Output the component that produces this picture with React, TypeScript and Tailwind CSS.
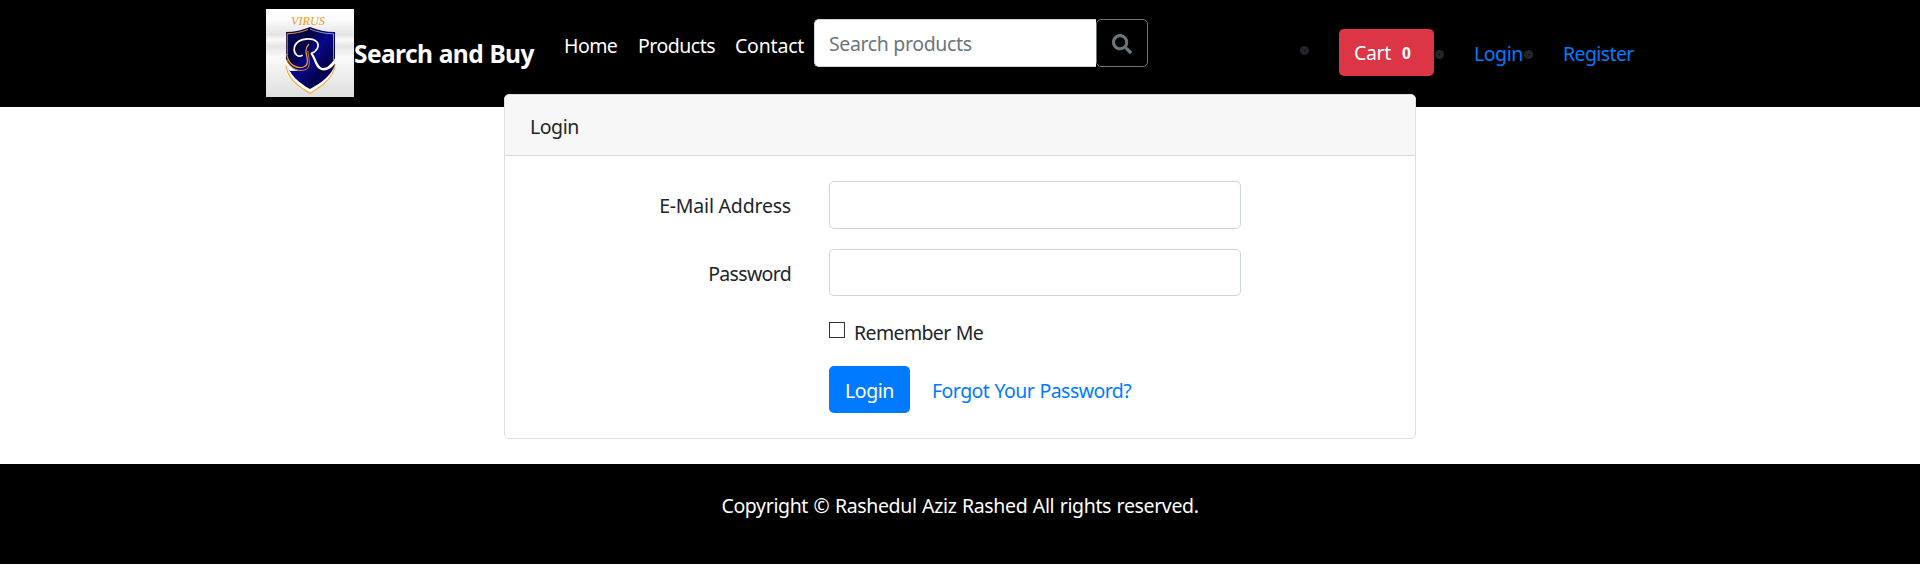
import type { ReactNode } from 'react';

function Logo() {
  return (
    <svg className="mt-[9px] size-[88px] shrink-0" viewBox="0 0 88 88" aria-label="Virus logo">
      <defs>
        <linearGradient id="paper" x1="0" y1="0" x2="0" y2="1">
          <stop offset="0" stopColor="#ffffff" />
          <stop offset=".12" stopColor="#fcfcfc" />
          <stop offset=".29" stopColor="#e4e4e4" />
          <stop offset=".35" stopColor="#fafafa" />
          <stop offset=".42" stopColor="#e5e5e5" />
          <stop offset=".55" stopColor="#fafafa" />
          <stop offset="1" stopColor="#dedede" />
        </linearGradient>
        <linearGradient id="navy" x1="0" y1="0" x2="1" y2="1">
          <stop offset="0" stopColor="#0a0a62" />
          <stop offset=".3" stopColor="#020240" />
          <stop offset=".5" stopColor="#08088a" />
          <stop offset=".72" stopColor="#02024e" />
          <stop offset="1" stopColor="#080878" />
        </linearGradient>
      </defs>
      <rect width="88" height="88" fill="url(#paper)" />
      <text x="25" y="16.2" textLength="34" lengthAdjust="spacingAndGlyphs" fontFamily="Liberation Serif, serif" fontStyle="italic" fontSize="12.5" fill="#f2992a">VIRUS</text>
      <path d="M20 56 C21 69 32 77 44 84.300 C56 77 68 69 69 55" fill="#fff" stroke="#f7a82f" strokeWidth="1.1" />
      <path d="M44 18 C51 21 60 23 69 23 V55 C66 66 56 73.500 44 80 C33 74 23.500 66 20 53 V23 C28 23 37 21 44 18Z" fill="url(#navy)" />
      <path d="M44 20 C51 23 59 24.700 67.500 24.800 V51" stroke="#c9c9e2" strokeWidth=".7" fill="none" />
      <path d="M42 20.500 C35 23.500 28 24.500 21.200 24.800 V46" stroke="#e39528" strokeWidth="1" fill="none" />
      <path d="M20 50 C24 60 31 62.500 38 61.500 L24 62 L20 56Z" fill="#fff" />
      <path d="M20.800 45 C22 56 31 60 37.500 58 C44.500 55.500 40 47 40 42 C40 38.500 41.500 36.500 43 35" stroke="#f0a030" strokeWidth="1.200" fill="none" />
      <path d="M20.500 50 C25 61 34 63 40 60.500 C46 57 42 48 42 42" stroke="#d98e2a" strokeWidth=".9" fill="none" />
      <path d="M36 46.500 C32.500 48.500 28.200 45.500 28.200 40.500 C28.200 33.500 35 29.800 42 29.800 C50 29.800 53.500 34 51.500 39 C50.300 42 48 43.300 45.500 44.300" stroke="#fff" strokeWidth="1.700" fill="none" strokeLinecap="round" />
      <path d="M45.500 43.500 C49.500 46 51 57 56 59 C61 60 66 54 69.300 49 V54 C65 60.500 59 63 54 60.500 C48.500 57.500 48 49 44.500 45Z" fill="#fff" />
    </svg>
  );
}

function Bullet({ className }: { className: string }) {
  return (
    <span className={`flex size-[9px] shrink-0 items-center justify-center rounded-full bg-[#212529] ${className}`}>
      <span className="size-px bg-black" />
    </span>
  );
}

function Field({ label, tracking, height, type }: { label: ReactNode; tracking: string; height: string; type: string }) {
  return (
    <div className="mb-5 flex items-start">
      <label className={`mt-[10px] w-[286px] text-right leading-[30px] ${tracking}`}>{label}</label>
      <input type={type} aria-label={type} className={`ml-[38px] w-[412px] rounded-[5px] border border-[#ced4da] bg-white px-[15px] outline-none ${height}`} />
    </div>
  );
}

export default function App() {
  return (
    <div className="h-[568px] overflow-hidden bg-white font-['Noto_Sans',sans-serif] text-[19.5px] leading-[30px] whitespace-nowrap text-[#212529]">
      <header className="flex h-[107px] items-start bg-black pl-[266px] text-white">
        <Logo />
        <a className="mt-[35px] w-[210px] shrink-0 text-[24.5px] leading-[38px] font-bold tracking-[-0.57px] [word-spacing:0.5px]">Search and Buy</a>
        <nav className="mt-[31px] flex w-[250px] shrink-0">
          <a className="w-[74px] shrink-0 tracking-[-0.55px]">Home</a>
          <a className="w-[97px] shrink-0 tracking-[-0.5px]">Products</a>
          <a className="tracking-[-0.2px]">Contact</a>
        </nav>
        <form className="mt-[19px] flex h-12 shrink-0">
          <input type="text" placeholder="Search products" className="h-12 w-[282px] rounded-l-[5px] border border-r-0 border-[#ced4da] bg-white px-[14px] tracking-[-0.36px] text-[#495057] outline-none placeholder:text-[#6c757d]" />
          <button type="button" aria-label="Search" className="flex h-12 w-[52px] items-center justify-center rounded-[5px] border border-[#6c757d] pt-px">
            <svg className="size-5" viewBox="0 0 512 512" fill="#6c757d">
              <path d="M505 442.7L405.3 343c-4.5-4.5-10.6-7-17-7H372c27.6-35.3 44-79.7 44-128C416 93.1 322.9 0 208 0S0 93.1 0 208s93.1 208 208 208c48.3 0 92.7-16.400 128-44v16.300c0 6.400 2.500 12.500 7 17l99.700 99.700c9.400 9.400 24.600 9.400 33.900 0l28.300-28.300c9.400-9.400 9.400-24.600.1-34zM208 336c-70.700 0-128-57.200-128-128 0-70.700 57.200-128 128-128 70.700 0 128 57.200 128 128 0 70.700-57.200 128-128 128z" />
            </svg>
          </button>
        </form>
        <div className="ml-[152px] flex shrink-0">
          <Bullet className="mt-[46px]" />
          <a className="mt-[29px] ml-[30px] flex h-[47px] w-[95px] rounded-[5px] bg-[#dc3545] pt-[9px] pl-[15px]">
            <span className="w-12 tracking-[-0.35px]">Cart</span>
            <span className="text-[15.5px] leading-[30px] font-bold">0</span>
          </a>
          <Bullet className="mt-[50px] ml-px" />
          <a className="mt-[39px] ml-[30px] w-[50px] tracking-[-0.45px] text-[#007bff]">Login</a>
          <Bullet className="mt-[50px]" />
          <a className="mt-[39px] ml-[30px] tracking-[-0.6px] text-[#007bff]">Register</a>
        </div>
      </header>

      <main className="relative mx-auto -mt-[13px] h-[345px] w-[912px] rounded-[5px] border border-[#dfdfdf] bg-white">
        <div className="h-[61px] rounded-t-[4px] border-b border-[#d9d9d9] bg-[#f7f7f7] pt-[17px] pl-[25px] tracking-[-0.45px]">Login</div>
        <form className="pt-[25px]">
          <Field label="E-Mail Address" tracking="tracking-[-0.2px]" height="h-12" type="email" />
          <Field label="Password" tracking="tracking-[-0.68px]" height="h-[47px]" type="password" />
          <div className="ml-[324px] flex h-[50px] items-start">
            <input type="checkbox" aria-label="Remember Me" className="mt-[6px] size-4 appearance-none border border-[#333] bg-white" />
            <label className="mt-0.5 ml-[9px] tracking-[-0.62px] [word-spacing:0.6px]">Remember Me</label>
          </div>
          <div className="ml-[324px] flex items-start">
            <button type="button" className="h-[47px] w-[81px] rounded-[5px] bg-[#007bff] pt-0.5 tracking-[-0.45px] text-white">Login</button>
            <a className="mt-[10px] ml-[22px] tracking-[-0.54px] [word-spacing:0.6px] text-[#007bff]">Forgot Your Password?</a>
          </div>
        </form>
      </main>

      <footer className="mt-[25px] h-[100px] bg-black pt-[27px] text-center tracking-[-0.36px] text-white [word-spacing:0.8px]">
        Copyright © Rashedul Aziz Rashed All rights reserved.
      </footer>
    </div>
  );
}
